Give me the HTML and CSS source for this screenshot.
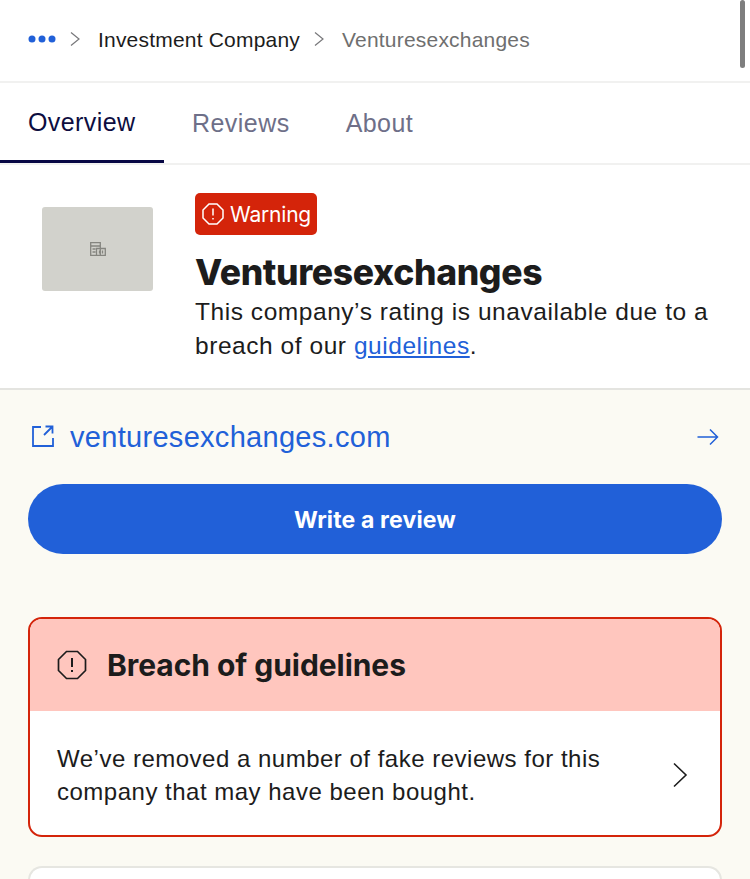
FILE: index.html
```html
<!DOCTYPE html>
<html lang="en">
<head>
<meta charset="utf-8">
<title>Venturesexchanges</title>
<link rel="stylesheet" href="styles.css">
</head>
<body>
<div class="scrollbar"></div>
<nav class="crumbs">
  <svg class="dots" width="28" height="8" viewBox="0 0 28 8"><circle cx="4" cy="4" r="3.5"/><circle cx="14" cy="4" r="3.5"/><circle cx="24" cy="4" r="3.5"/></svg>
  <svg class="sep" width="12" height="16" viewBox="0 0 12 16"><path d="M2 1.500 10 8l-8 6.500"/></svg>
  <span class="crumb">Investment Company</span>
  <svg class="sep" width="12" height="16" viewBox="0 0 12 16"><path d="M2 1.500 10 8l-8 6.500"/></svg>
  <span class="crumb current">Venturesexchanges</span>
</nav>
<div class="tabs">
  <span class="tab active">Overview</span>
  <span class="tab">Reviews</span>
  <span class="tab">About</span>
</div>
<header class="company">
  <div class="logo">
    <svg width="16" height="14" viewBox="0 0 16 14"><path d="M.7.7h9.600v12.600H.7zM.7 4h9.600M2.500 7h3M2.500 10h3M6.500 6.500h8.800v6.800H6.500zM9.500 8.500v3M12.500 8.500v3"/></svg>
  </div>
  <div class="info">
    <div class="badge">
      <svg width="22" height="22" viewBox="0 0 22 22"><path class="oct" d="M7 1h8l6 6v8l-6 6H7l-6-6V7z"/><path class="mark" d="M11 5.500v7M11 15v1.600"/></svg>
      Warning
    </div>
    <h1>Venturesexchanges</h1>
    <p>This company’s rating is unavailable due to a breach of our <a href="#">guidelines</a>.</p>
  </div>
</header>
<main class="content">
  <a class="site" href="#">
    <svg class="ext" width="22" height="22" viewBox="0 0 22 22"><path d="M9 2H1v19h20v-8M12 10 20.500 1.500M13.500 1.500h7v7"/></svg>
    <span class="site-name">venturesexchanges.com</span>
    <svg class="arrow" width="24" height="18" viewBox="0 0 24 18"><path d="M1.500 9h20M14 1.500 21.500 9 14 16.500"/></svg>
  </a>
  <a class="cta" href="#">Write a review</a>
  <section class="breach">
    <div class="breach-head">
      <svg width="30" height="30" viewBox="0 0 30 30"><path class="oct" d="M9.500 1.500h11l8 8v11l-8 8h-11l-8-8v-11z"/><path class="mark" d="M15 8v9M15 20v2"/></svg>
      <h2>Breach of guidelines</h2>
    </div>
    <div class="breach-body">
      <p>We’ve removed a number of fake reviews for this company that may have been bought.</p>
      <svg class="chev" width="16" height="26" viewBox="0 0 16 26"><path d="M2 1.500 14 13 2 24.500"/></svg>
    </div>
  </section>
  <div class="next-card"></div>
</main>
</body>
</html>
```

FILE: styles.css
```css
* { box-sizing: border-box; }
html, body { margin: 0; height: 879px; overflow: hidden; }
body {
  position: relative;
  background: #fff;
  color: #1c1c1c;
  font-family: "Liberation Sans", Arial, sans-serif;
  font-size: 24px;
}
svg { flex: none; fill: none; display: block; }
.scrollbar {
  position: absolute; top: 0; right: 5px;
  width: 5px; height: 68px;
  border-radius: 3px; background: #7e7e7e;
}
.crumbs {
  height: 83px;
  padding: 0 0 2px 28px;
  display: flex; align-items: center;
  border-bottom: 2px solid #f1f1f0;
  font-size: 21px;
  letter-spacing: .2px;
}
.dots { fill: #2160d8; margin-top: -1px; }
.sep { margin: -1px 0 0 13px; stroke: #77777a; stroke-width: 1.200; }
.crumb { margin-left: 17px; }
.current { color: #6f6f6f; }
.tabs {
  height: 82px;
  display: flex;
  border-bottom: 2px solid #f1f1f0;
  font-size: 25px;
  letter-spacing: .45px;
}
.tab {
  color: #6e6f88;
  padding: 26px 0 0;
  margin-left: 56px;
}
.tab.active {
  width: 164px; height: 80px;
  margin: 0 -28px 0 0;
  padding: 25px 0 0 28px;
  color: #0d0d3f;
  border-bottom: 3px solid #070744;
  letter-spacing: .4px;
}
.company {
  height: 225px;
  display: flex;
  padding: 28px 28px 0 42px;
  border-bottom: 2px solid #e4e4e0;
}
.logo {
  width: 111px; height: 84px;
  margin-top: 14px;
  background: #d2d2cc;
  border-radius: 3px;
  display: flex; align-items: center; justify-content: center;
}
.logo svg { stroke: #85857f; stroke-width: 1.300; }
.info { margin-left: 42px; flex: 1; }
.badge {
  width: 122px; height: 42px;
  display: flex; align-items: center; gap: 6px;
  padding-left: 7px;
  border-radius: 5px;
  background: #d4240a;
  color: #fff;
  font-family: "Inter", sans-serif;
  font-size: 21px;
  letter-spacing: -.2px;
}
.badge .oct, .badge .mark { stroke: #fff; stroke-width: 1.500; }
h1 {
  margin: 16px 0 0;
  font-family: "Inter", sans-serif;
  font-size: 35.500px;
  font-weight: 800;
  line-height: 44px;
  letter-spacing: -.35px;
  color: #1c1c1c;
}
.info p {
  margin: 0;
  font-size: 24.500px;
  line-height: 33.500px;
  letter-spacing: .55px;
}
.info a { color: #2160d8; }
.content {
  height: 489px;
  background: #fbfaf3;
  padding: 0 28px;
}
.site {
  height: 94px;
  display: flex; align-items: center;
  padding: 1px 2px 0 4px;
  color: #2160d8;
  text-decoration: none;
  font-size: 29px;
  letter-spacing: .3px;
}
.ext { stroke: #2160d8; stroke-width: 1.800; margin-top: -3px; }
.site-name { margin-left: 16px; flex: 1; }
.arrow { stroke: #2160d8; stroke-width: 1.500; margin-top: -1px; }
.cta {
  height: 70px;
  padding-top: 1px;
  display: flex; align-items: center; justify-content: center;
  background: #2160d8;
  border-radius: 35px;
  color: #fff;
  font-family: "Inter", sans-serif;
  font-size: 23px;
  font-weight: 700;
  letter-spacing: .15px;
  text-decoration: none;
}
.breach {
  margin-top: 63px;
  height: 220px;
  border: 2px solid #d4240a;
  border-radius: 14px;
  overflow: hidden;
  background: #fff;
}
.breach-head {
  height: 92px;
  background: #ffc6be;
  display: flex; align-items: center;
  padding-left: 27px;
}
.breach-head .oct { stroke: #1c1c1c; stroke-width: 1.700; }
.breach-head .mark { stroke: #1c1c1c; stroke-width: 2; }
h2 {
  margin: 0 0 0 20px;
  font-family: "Inter", sans-serif;
  font-size: 30px;
  font-weight: 700;
  letter-spacing: -.05px;
  color: #1c1c1c;
}
.breach-body {
  display: flex; align-items: center;
  padding: 31px 32px 0 27px;
}
.breach-body p {
  margin: 0;
  width: 560px;
  font-size: 24px;
  line-height: 33px;
  letter-spacing: .5px;
}
.chev { stroke: #1c1c1c; stroke-width: 1.600; margin: -1px 0 0 auto; }
.next-card {
  margin-top: 29px;
  height: 14px;
  background: #fff;
  border: 2px solid #e6e6e1;
  border-bottom: 0;
  border-radius: 14px 14px 0 0;
}
```
